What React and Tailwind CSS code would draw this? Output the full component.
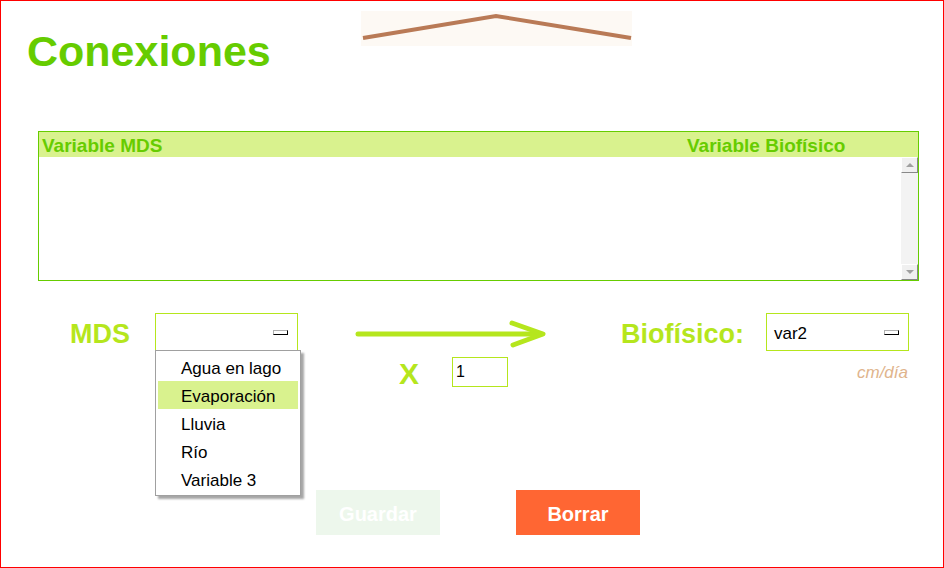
import { useState } from "react";

const opciones = ["Agua en lago", "Evaporación", "Lluvia", "Río", "Variable 3"];

const font = "font-['Liberation_Sans',Arial,sans-serif]";

const Indicator = () => (
  <div className="w-[15px] h-[5px] bg-white border border-[#b0b0b0] border-r-black border-b-black" />
);

const Chevron = () => (
  <div className="absolute left-[360px] top-[10px] w-[271px] h-[35px] bg-[#fdf9f4]">
    <svg width="271" height="35" viewBox="0 0 271 35">
      <polyline points="2,27 135,5 270,27" fill="none" stroke="#b97a56" strokeWidth="4" />
    </svg>
  </div>
);

const Arrow = () => (
  <svg width="194" height="38" viewBox="0 0 194 38">
    <line x1="3" y1="21" x2="186" y2="21" stroke="#b5e61d" strokeWidth="5" strokeLinecap="round" />
    <polyline points="157,10 188,21 158,32" fill="none" stroke="#b5e61d" strokeWidth="5" strokeLinecap="round" strokeLinejoin="round" />
  </svg>
);

export default function App() {
  const [selected, setSelected] = useState("Evaporación");

  return (
    <div className={`relative w-[944px] h-[568px] bg-white border border-[#ff0000] overflow-hidden ${font}`}>
      <Chevron />

      <div className="pt-[29px] pl-[26px]">
        <h1 className="text-[43px] leading-none font-bold text-[#66cc00]">Conexiones</h1>
      </div>

      {/* tabla de conexiones */}
      <div className="mt-[58px] ml-[37px] w-[881px] h-[150px] border border-[#66cc00] flex flex-col">
        <div className="h-[25px] pt-[3px] bg-[#d9f28e] flex items-center text-[19px] font-bold text-[#66cc00]">
          <div className="w-[648px] pl-[3px]">Variable MDS</div>
          <div>Variable Biofísico</div>
        </div>
        <div className="flex-1 flex justify-end">
          <div className="w-[17px] flex flex-col bg-[#f3f3f3]">
            <div className="h-[16px] bg-[#f0f0f0] border border-[#fff] border-r-[#888] border-b-[#888] flex items-center justify-center">
              <div className="w-0 h-0 border-l-[4px] border-r-[4px] border-b-[4px] border-l-transparent border-r-transparent border-b-[#a0a0a0]" />
            </div>
            <div className="flex-1" />
            <div className="h-[16px] bg-[#f0f0f0] border border-[#fff] border-r-[#888] border-b-[#888] flex items-center justify-center">
              <div className="w-0 h-0 border-l-[4px] border-r-[4px] border-t-[4px] border-l-transparent border-r-transparent border-t-[#a0a0a0]" />
            </div>
          </div>
        </div>
      </div>

      {/* seleccion de variables */}
      <div className="mt-[32px] h-[177px] pl-[69px] flex items-start">
        <div className="w-[85px] h-[38px] pt-[5px] flex items-center text-[27px] font-bold text-[#b5e61d]">MDS</div>

        <div className="relative w-[143px]">
          <div className="h-[38px] border border-[#b5e61d] flex items-center justify-end pr-[9px]">
            <Indicator />
          </div>
          <div className="absolute left-0 top-[37px] w-[146px] h-[146px] bg-white border border-[#a0a0a0] shadow-[3px_3px_2px_rgba(0,0,0,0.35)] pt-[2px] px-[2px] z-10">
            {opciones.map((op) => (
              <div
                key={op}
                onClick={() => setSelected(op)}
                className={`h-[28px] pt-[4px] flex items-center pl-[23px] text-[17px] text-black cursor-pointer ${
                  selected === op ? "bg-[#d9f28e]" : ""
                }`}
              >
                {op}
              </div>
            ))}
          </div>
        </div>

        <div className="ml-[57px] w-[194px]">
          <Arrow />
          <div className="mt-[6px] h-[30px] flex items-center">
            <span className="ml-[44px] w-[53px] pt-[3px] text-[30px] leading-none font-bold text-[#b5e61d]">X</span>
            <div className="w-[56px] h-[30px] border border-[#b5e61d] flex items-center pl-[3px] text-[16px] text-black">1</div>
          </div>
        </div>

        <div className="ml-[72px] w-[145px] h-[38px] pt-[5px] flex items-center text-[27px] font-bold text-[#b5e61d]">Biofísico:</div>

        <div className="w-[143px]">
          <div className="h-[38px] pt-[3px] border border-[#b5e61d] flex items-center justify-between pl-[7px] pr-[9px] text-[17px] text-black">
            <span>var2</span>
            <div className="-mt-[3px]">
              <Indicator />
            </div>
          </div>
          <div className="mt-[9px] text-right pr-[1px] text-[17px] italic text-[#e0b48c]">cm/día</div>
        </div>
      </div>

      {/* botones */}
      <div className="pl-[315px] flex gap-[76px]">
        <button className="w-[124px] h-[45px] pt-[3px] bg-[#edf7ec] text-white text-[20px] font-bold">Guardar</button>
        <button className="w-[124px] h-[45px] pt-[3px] bg-[#ff6633] text-white text-[20px] font-bold">Borrar</button>
      </div>
    </div>
  );
}
